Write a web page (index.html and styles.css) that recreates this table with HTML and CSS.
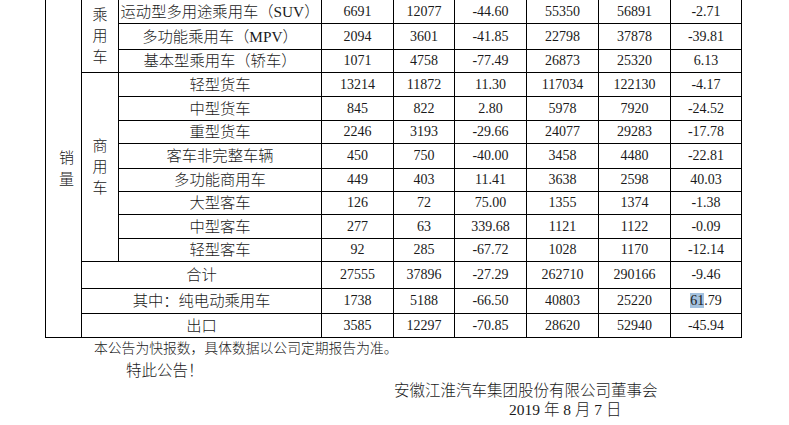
FILE: index.html
```html
<!DOCTYPE html>
<html lang="zh-CN">
<head>
<meta charset="utf-8">
<title>销量快报</title>
<link rel="stylesheet" href="styles.css">
</head>
<body>
<table class="sales">
  <colgroup>
    <col class="c-sec"><col class="c-grp"><col class="c-name">
    <col class="c-n1"><col class="c-n2"><col class="c-n3"><col class="c-n4"><col class="c-n5"><col class="c-n6">
  </colgroup>
  <tbody>
    <tr>
      <td rowspan="14" class="vert sec"><span>销<br>量</span></td>
      <td rowspan="3" class="vert"><span>乘<br>用<br>车</span></td>
      <td class="name">运动型多用途乘用车（SUV）</td>
      <td>6691</td><td>12077</td><td>-44.60</td><td>55350</td><td>56891</td><td>-2.71</td>
    </tr>
    <tr class="r26">
      <td class="name">多功能乘用车（MPV）</td>
      <td>2094</td><td>3601</td><td>-41.85</td><td>22798</td><td>37878</td><td>-39.81</td>
    </tr>
    <tr class="r23">
      <td class="name">基本型乘用车（轿车）</td>
      <td>1071</td><td>4758</td><td>-77.49</td><td>26873</td><td>25320</td><td>6.13</td>
    </tr>
    <tr>
      <td rowspan="8" class="vert"><span>商<br>用<br>车</span></td>
      <td class="name">轻型货车</td>
      <td>13214</td><td>11872</td><td>11.30</td><td>117034</td><td>122130</td><td>-4.17</td>
    </tr>
    <tr>
      <td class="name">中型货车</td>
      <td>845</td><td>822</td><td>2.80</td><td>5978</td><td>7920</td><td>-24.52</td>
    </tr>
    <tr class="r23">
      <td class="name">重型货车</td>
      <td>2246</td><td>3193</td><td>-29.66</td><td>24077</td><td>29283</td><td>-17.78</td>
    </tr>
    <tr class="r25">
      <td class="name">客车非完整车辆</td>
      <td>450</td><td>750</td><td>-40.00</td><td>3458</td><td>4480</td><td>-22.81</td>
    </tr>
    <tr class="r23">
      <td class="name">多功能商用车</td>
      <td>449</td><td>403</td><td>11.41</td><td>3638</td><td>2598</td><td>40.03</td>
    </tr>
    <tr class="r23">
      <td class="name">大型客车</td>
      <td>126</td><td>72</td><td>75.00</td><td>1355</td><td>1374</td><td>-1.38</td>
    </tr>
    <tr>
      <td class="name">中型客车</td>
      <td>277</td><td>63</td><td>339.68</td><td>1121</td><td>1122</td><td>-0.09</td>
    </tr>
    <tr class="r23">
      <td class="name">轻型客车</td>
      <td>92</td><td>285</td><td>-67.72</td><td>1028</td><td>1170</td><td>-12.14</td>
    </tr>
    <tr class="r27">
      <td colspan="2" class="name">合计</td>
      <td>27555</td><td>37896</td><td>-27.29</td><td>262710</td><td>290166</td><td>-9.46</td>
    </tr>
    <tr class="r25">
      <td colspan="2" class="name">其中：纯电动乘用车</td>
      <td>1738</td><td>5188</td><td>-66.50</td><td>40803</td><td>25220</td><td><span class="sel">61</span>.79</td>
    </tr>
    <tr>
      <td colspan="2" class="name">出口</td>
      <td>3585</td><td>12297</td><td>-70.85</td><td>28620</td><td>52940</td><td>-45.94</td>
    </tr>
  </tbody>
</table>
<div class="notes">
  <p class="note">本公告为快报数，具体数据以公司定期报告为准。</p>
  <p class="hereby">特此公告！</p>
  <p class="sign">安徽江淮汽车集团股份有限公司董事会</p>
  <p class="date">2019 年 8 月 7 日</p>
</div>
</body>
</html>
```
FILE: styles.css
```css
html, body {
  margin: 0;
  padding: 0;
  background: #ffffff;
}
body {
  font-family: "Liberation Serif", "Noto Sans CJK SC", serif;
  color: #1a1a1a;
  overflow: hidden;
}
.sales {
  border-collapse: collapse;
  table-layout: fixed;
  width: 697px;
  margin: -1px 0 0 45px;
}
.c-sec { width: 36px; }
.c-grp { width: 37px; }
.c-name { width: 203px; }
.c-n1 { width: 72px; }
.c-n2 { width: 61px; }
.c-n3 { width: 72px; }
.c-n4 { width: 72px; }
.c-n5 { width: 72px; }
.c-n6 { width: 71px; }
.sales td {
  border: 1px solid #000;
  padding: 0;
  height: 23px;
  text-align: center;
  vertical-align: middle;
  font-size: 14px;
  line-height: 16px;
  white-space: nowrap;
}
.sales tr.r23 td { height: 22px; }
.sales tr.r25 td { height: 24px; }
.sales tr.r26 td { height: 25px; }
.sales tr.r27 td { height: 26px; }
.sales td.name {
  font-size: 15.3px;
  font-weight: 300;
}
.sales td.vert {
  font-size: 15px;
  font-weight: 300;
  line-height: 21px;
}
.sales td.sec {
  padding-left: 6px;
}
.sel {
  background: #a3c1de;
}
.notes p {
  margin: 0;
  font-size: 15.5px;
  font-weight: 300;
  white-space: nowrap;
}
.notes p.note {
  font-size: 13.8px;
  line-height: 22px;
  padding-left: 94px;
}
.hereby {
  line-height: 21px;
  padding-left: 126px;
}
.sign {
  line-height: 19px;
  padding-left: 394px;
}
.date {
  line-height: 20px;
  padding-left: 509px;
}
```
